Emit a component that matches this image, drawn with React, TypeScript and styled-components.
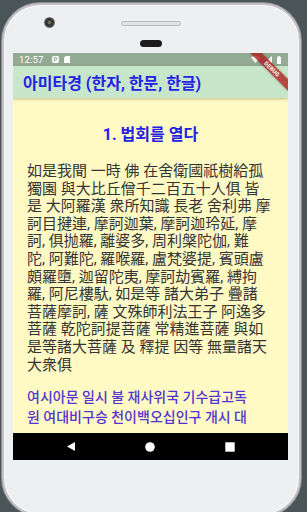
import React from "react";
import styled, { createGlobalStyle } from "styled-components";

const GlobalStyle = createGlobalStyle`
  html, body {
    margin: 0;
    padding: 0;
    width: 307px;
    height: 512px;
    overflow: hidden;
    background: #4b5456;
  }
  #root { width: 307px; height: 512px; }
`;

const FONT = `Roboto, "Noto Sans CJK KR", "Noto Sans", sans-serif`;

const Stage = styled.div`
  width: 307px;
  height: 512px;
  box-sizing: border-box;
  padding: 3px 0 0 2px;
  overflow: hidden;
  font-family: ${FONT};
`;

const Phone = styled.div`
  width: 299px;
  height: 513px;
  box-sizing: border-box;
  border-radius: 38px;
  background: #eeeff1;
  border: 2px solid #c3c1c6;
  box-shadow: inset 0 0 0 1px #f9f9fa, 0 0 0 1px #8e8d91;
  display: flex;
  flex-direction: column;
  align-items: flex-start;
  padding-left: 9px;
`;

const TopBezel = styled.div`
  position: relative;
  width: 275px;
  height: 48px;
  display: flex;
  flex-direction: column;
  align-items: center;
  padding-top: 16px;
  box-sizing: border-box;
`;

const Camera = styled.div`
  position: absolute;
  left: 31px;
  top: 12px;
  width: 11px;
  height: 11px;
  border-radius: 50%;
  background: radial-gradient(circle at 50% 50%, #6b6a5e 0 1.5px, #2a2a2a 2.5px, #3a3a3a 4px, #8c8c8c 5.5px);
`;

const Speaker = styled.div`
  width: 60px;
  height: 5px;
  border-radius: 3px;
  background: #e3e3e5;
  border: 1px solid #b9b9bc;
  box-sizing: border-box;
`;

const Sensor = styled.div`
  margin-top: 14px;
  width: 22px;
  height: 7px;
  border-radius: 4px;
  background: #1c1c1c;
`;

const Screen = styled.div`
  position: relative;
  width: 275px;
  height: 407px;
  overflow: hidden;
  display: flex;
  flex-direction: column;
`;

const StatusBar = styled.div`
  height: 13px;
  flex: none;
  background: #93aa95;
  display: flex;
  align-items: center;
  padding: 0 7px 0 6px;
  gap: 5px;
  color: #ffffff;
  font-family: Roboto, sans-serif;
  font-size: 9.5px;
`;

const Clock = styled.span`
  margin-right: 3px;
  letter-spacing: 0.2px;
`;

const Spacer = styled.div`
  flex: 1;
`;

const AppBar = styled.div`
  height: 32px;
  flex: none;
  background: #c8e6c9;
  display: flex;
  align-items: center;
  padding-left: 10px;
  box-shadow: 0 1px 3px rgba(120, 110, 60, 0.45);
  position: relative;
  z-index: 1;
`;

const Title = styled.h1`
  margin: 0;
  font-size: 16px;
  font-weight: 700;
  color: #2323e4;
  font-family: ${FONT};
`;

const Content = styled.div`
  flex: 1;
  background: #fff9c4;
  padding: 26px 14px 0 14px;
  overflow: hidden;
`;

const Heading = styled.h2`
  margin: 0;
  text-align: center;
  font-size: 16px;
  line-height: 22px;
  font-weight: 700;
  color: #2323e4;
  font-family: ${FONT};
`;

const Paragraph = styled.p<{ $tone: "hanzi" | "hangul" }>`
  margin: ${(p) => (p.$tone === "hanzi" ? "17px 0 0" : "14px 0 0")};
  font-size: ${(p) => (p.$tone === "hanzi" ? "15px" : "14px")};
  line-height: ${(p) => (p.$tone === "hanzi" ? "17.6px" : "19.5px")};
  color: ${(p) => (p.$tone === "hanzi" ? "#353535" : "#5434d0")};
  font-weight: ${(p) => (p.$tone === "hanzi" ? 400 : 500)};
  font-family: ${FONT};
  display: flex;
  flex-direction: column;
`;

const Line = styled.span`
  white-space: nowrap;
`;

const NavBar = styled.div`
  height: 27px;
  flex: none;
  background: #000;
  display: flex;
  align-items: center;
  justify-content: center;
  gap: 70px;
`;

const Banner = styled.div`
  position: absolute;
  left: 232px;
  top: 12px;
  width: 54px;
  height: 8px;
  background: rgba(176, 28, 28, 0.78);
  transform: rotate(45deg);
  display: flex;
  align-items: center;
  justify-content: center;
  color: #fff;
  font-family: Roboto, sans-serif;
  font-weight: 700;
  font-size: 5.7px;
  letter-spacing: 0.2px;
  z-index: 3;
  box-shadow: 0 0 3px rgba(0, 0, 0, 0.3);
`;

const hanziLines = [
  "如是我聞 一時 佛 在舍衛國祇樹給孤",
  "獨園 與大比丘僧千二百五十人俱 皆",
  "是 大阿羅漢 衆所知識 長老 舍利弗 摩",
  "訶目揵連, 摩訶迦葉, 摩訶迦玲延, 摩",
  "訶, 俱抛羅, 離婆多, 周利槃陀伽, 難",
  "陀, 阿難陀, 羅喉羅, 盧梵婆提, 賓頭盧",
  "頗羅墮, 迦留陀夷, 摩訶劫賓羅, 縛拘",
  "羅, 阿尼樓馱, 如是等 諸大弟子 疊諸",
  "菩薩摩訶, 薩 文殊師利法王子 阿逸多",
  "菩薩 乾陀訶提菩薩 常精進菩薩 與如",
  "是等諸大菩薩 及 釋提 因等 無量諸天",
  "大衆俱",
];

const hangulLines = [
  "여시아문 일시 불 재사위국 기수급고독",
  "원 여대비구승 천이백오십인구 개시 대",
];

const PIcon = () => (
  <svg width="7" height="7" viewBox="0 0 7 7">
    <rect x="0" y="0" width="7" height="7" rx="2" fill="#fff" />
    <path d="M2.3 5.6V1.6h1.6a1.2 1.2 0 0 1 0 2.4H2.3" stroke="#93aa95" strokeWidth="1" fill="none" />
  </svg>
);

const SdIcon = () => (
  <svg width="6" height="7" viewBox="0 0 6 7">
    <path d="M1.8 0H6v7H0V1.8z" fill="#fff" />
  </svg>
);

const WifiIcon = () => (
  <svg width="9" height="7" viewBox="0 0 9 7">
    <path d="M0 1.6A7 7 0 0 1 9 1.6L4.5 7z" fill="#fff" />
  </svg>
);

const SignalIcon = () => (
  <svg width="7" height="7" viewBox="0 0 7 7">
    <path d="M7 0V7H0z" fill="#fff" />
  </svg>
);

const BatteryIcon = () => (
  <svg width="4" height="8" viewBox="0 0 4 8">
    <rect x="1.2" y="0" width="1.6" height="1" fill="#fff" />
    <rect x="0" y="1" width="4" height="7" fill="#fff" />
  </svg>
);

const BackIcon = () => (
  <svg width="8" height="9" viewBox="0 0 8 9">
    <path d="M8 0V9L0 4.5z" fill="#fff" />
  </svg>
);

const HomeIcon = () => (
  <svg width="10" height="10" viewBox="0 0 10 10">
    <circle cx="5" cy="5" r="4.8" fill="#fff" />
  </svg>
);

const RecentIcon = () => (
  <svg width="10" height="10" viewBox="0 0 10 10">
    <rect x="0.3" y="0.3" width="9.4" height="9.4" fill="#fff" />
  </svg>
);

export default function App() {
  return (
    <>
      <GlobalStyle />
      <Stage>
        <Phone>
          <TopBezel>
            <Camera />
            <Speaker />
            <Sensor />
          </TopBezel>
          <Screen>
            <StatusBar>
              <Clock>12:57</Clock>
              <PIcon />
              <SdIcon />
              <Spacer />
              <WifiIcon />
              <SignalIcon />
              <BatteryIcon />
            </StatusBar>
            <AppBar>
              <Title>아미타경 (한자, 한문, 한글)</Title>
            </AppBar>
            <Content>
              <Heading>1. 법회를 열다</Heading>
              <Paragraph $tone="hanzi">
                {hanziLines.map((l) => (
                  <Line key={l}>{l}</Line>
                ))}
              </Paragraph>
              <Paragraph $tone="hangul">
                {hangulLines.map((l) => (
                  <Line key={l}>{l}</Line>
                ))}
              </Paragraph>
            </Content>
            <NavBar>
              <BackIcon />
              <HomeIcon />
              <RecentIcon />
            </NavBar>
            <Banner>DEBUG</Banner>
          </Screen>
        </Phone>
      </Stage>
    </>
  );
}
